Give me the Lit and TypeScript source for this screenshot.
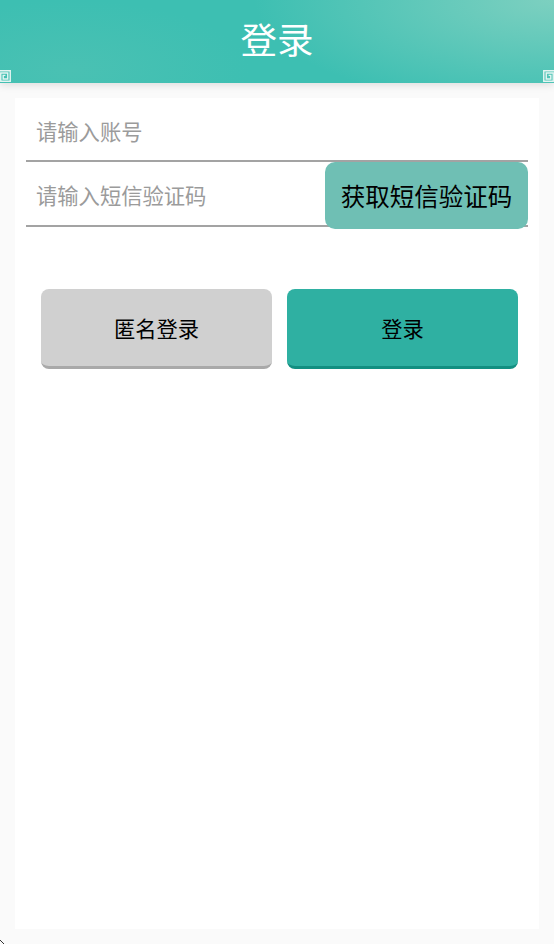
import { LitElement, html, css, svg } from "lit";
import { customElement } from "lit/decorators.js";

const meander = svg`<svg viewBox="0 0 11 12" width="11" height="12" aria-hidden="true"><path d="M0 .75h10.25v10.5H.75V3h7v6H3.2V5.4h2.2" fill="none" stroke="#e4f5f2" stroke-width="1.4"/></svg>`;
const mark = svg`<svg viewBox="0 0 4 4" width="4" height="4" aria-hidden="true"><path d="M0 0l4 4" fill="none" stroke="#333" stroke-width="1"/></svg>`;

@customElement("app-root")
export class AppRoot extends LitElement {
  static styles = css`
    :host {
      display: block;
      position: relative;
      height: 944px;
      background: #fafafa;
      overflow: hidden;
      font-family: "Noto Sans CJK SC", "Liberation Sans", sans-serif;
    }
    .header {
      position: relative;
      height: 83px;
      display: flex;
      justify-content: center;
      color: #fff;
      font-size: 36.5px;
      line-height: 83px;
      background:
        radial-gradient(ellipse 300px 110px at 100% 0, #7dd0c0 0%, rgba(125, 208, 192, 0) 100%),
        radial-gradient(ellipse 180px 70px at 70px 70px, #4ac1b3 0%, rgba(74, 193, 179, 0) 100%),
        #3dbfb2;
      box-shadow: 0 2px 8px rgba(0, 0, 0, 0.12);
    }
    .title { margin-top: -3px; }
    .corner { position: absolute; bottom: 1px; line-height: 0; }
    .corner.left { left: 0; }
    .corner.right { right: 0; transform: scaleX(-1); }
    .mark { position: absolute; left: 0; bottom: 0; line-height: 0; }
    .card {
      margin: 15px 15px 0;
      height: 831px;
      background: #fff;
      padding: 0 11px;
      box-sizing: border-box;
    }
    .field {
      display: flex;
      align-items: center;
      box-sizing: border-box;
      height: 64px;
      padding: 2px 0 0 10px;
      border-bottom: 2px solid #a3a3a3;
      color: #9b9b9b;
      font-size: 21.3px;
      position: relative;
    }
    .field.sms { height: 65px; }
    .field span { flex: 1; }
    .code {
      position: absolute;
      right: 0;
      top: 0;
      width: 203px;
      height: 67px;
      display: flex;
      align-items: center;
      justify-content: center;
      background: #6fbfb4;
      border-radius: 10px;
      color: #000;
      font-size: 24.5px;
    }
    .actions {
      display: flex;
      gap: 15px;
      padding: 62px 10px 0 15px;
    }
    .btn {
      flex: 1;
      height: 80px;
      box-sizing: border-box;
      display: flex;
      align-items: center;
      justify-content: center;
      border-radius: 8px;
      font-size: 21.3px;
      color: #000;
    }
    .gray { background: #d0d0d0; border-bottom: 3px solid #a9a9a9; }
    .teal { background: #2fb0a2; border-bottom: 3px solid #128f81; }
  `;

  render() {
    return html`
      <div class="header">
        <div class="title">登录</div>
        <div class="corner left">${meander}</div>
        <div class="corner right">${meander}</div>
      </div>
      <div class="card">
        <div class="field"><span>请输入账号</span></div>
        <div class="field sms">
          <span>请输入短信验证码</span>
          <div class="code">获取短信验证码</div>
        </div>
        <div class="actions">
          <div class="btn gray">匿名登录</div>
          <div class="btn teal">登录</div>
        </div>
      </div>
      <div class="mark">${mark}</div>
    `;
  }
}
